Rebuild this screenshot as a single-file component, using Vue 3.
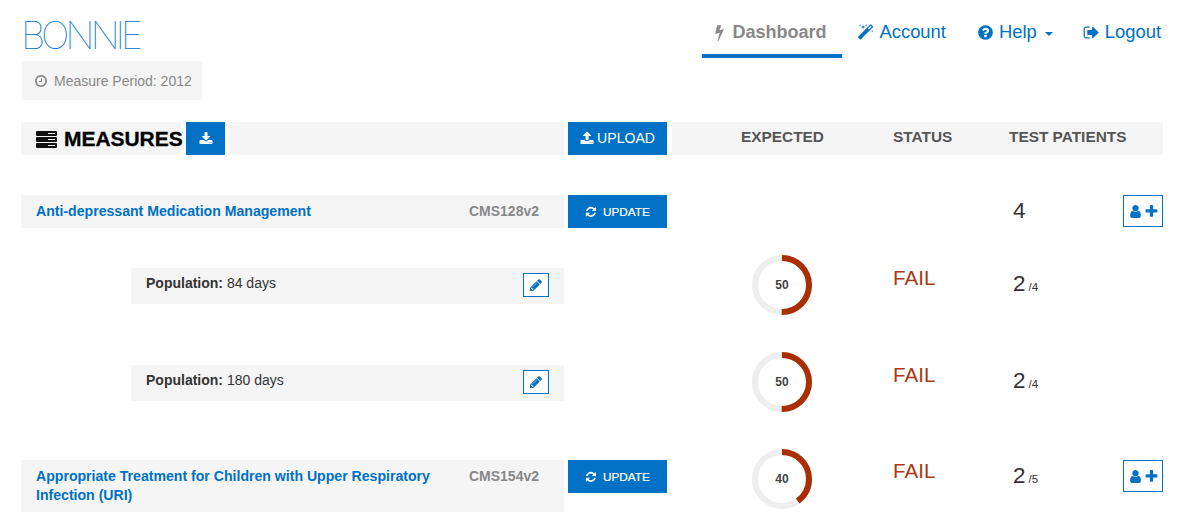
<template>
  <div class="page">
    <div class="top">
      <div class="brand">
        <div class="logo">BONNIE</div>
        <div class="period">
          <svg class="ico" viewBox="0 0 1792 1792"><path :d="icons.clock" /></svg>
          Measure Period: 2012
        </div>
      </div>
      <nav class="nav">
        <a class="nav-item active"><svg class="ico" viewBox="0 0 1792 1792"><path :d="icons.bolt" /></svg>Dashboard</a>
        <a class="nav-item account"><svg class="ico" viewBox="0 0 1792 1792"><path :d="icons.magic" /></svg>Account</a>
        <a class="nav-item"><svg class="ico" viewBox="0 0 1792 1792"><path :d="icons.help" /></svg>Help<span class="caret"></span></a>
        <a class="nav-item"><svg class="ico" viewBox="0 0 1792 1792"><path :d="icons.logout" /></svg>Logout</a>
      </nav>
    </div>

    <div class="row head">
      <div class="head-left">
        <div class="head-title">
          <span class="stack"><i></i><i></i><i></i></span>
          <h1>MEASURES</h1>
        </div>
        <button class="btn btn-icon"><svg class="ico" viewBox="0 0 1792 1792"><path :d="icons.download" /></svg></button>
        <div class="head-fill"></div>
      </div>
      <button class="btn btn-upload"><svg class="ico" viewBox="0 0 1792 1792"><path :d="icons.upload" /></svg><span>UPLOAD</span></button>
      <div class="head-cell expected">EXPECTED</div>
      <div class="head-cell">STATUS</div>
      <div class="head-cell patients-head">TEST PATIENTS</div>
    </div>

    <div v-for="row in rows" :key="row.id" class="row" :class="row.title ? 'measure' : 'pop'">
      <div v-if="row.title" class="bar measure-bar">
        <a class="measure-name">{{ row.title }}</a>
        <span class="code">{{ row.code }}</span>
      </div>
      <div v-else class="bar pop-bar">
        <span class="pop-text"><strong>Population:</strong> {{ row.days }} days</span>
        <button class="edit"><svg class="ico" viewBox="0 0 1792 1792"><path :d="icons.pencil" /></svg></button>
      </div>

      <div>
        <button v-if="row.title" class="btn btn-update"><svg class="ico" viewBox="0 0 1792 1792"><path :d="icons.refresh" /></svg>UPDATE</button>
      </div>

      <div>
        <svg v-if="row.expected" class="donut" width="60" height="60" viewBox="0 0 60 60">
          <circle cx="30" cy="30" r="27" class="track" />
          <circle cx="30" cy="30" r="27" class="arc" :stroke-dasharray="dash(row.expected)" transform="rotate(-90 30 30)" />
          <text x="30" y="34">{{ row.expected }}</text>
        </svg>
      </div>

      <div class="status">{{ row.expected ? 'FAIL' : '' }}</div>

      <div class="count">{{ row.passed }}<small v-if="row.total">/{{ row.total }}</small></div>

      <div>
        <button v-if="row.title" class="add">
          <svg class="ico" viewBox="0 0 1792 1792"><path :d="icons.user" /></svg>
          <svg class="ico" viewBox="0 0 1792 1792"><path :d="icons.plus" /></svg>
        </button>
      </div>
    </div>
  </div>
</template>

<script setup>
const icons = {
  clock: 'M1024 544v448q0 14-9 23t-23 9h-320q-14 0-23-9t-9-23v-64q0-14 9-23t23-9h224v-352q0-14 9-23t23-9h64q14 0 23 9t9 23zm416 352q0-148-73-273t-198-198-273-73-273 73-198 198-73 273 73 273 198 198 273 73 273-73 198-198 73-273zm224 0q0 209-103 385.500t-279.500 279.500-385.500 103-385.500-103-279.500-279.500-103-385.500 103-385.500 279.500-279.500 385.500-103 385.500 103 279.500 279.500 103 385.500z',
  bolt: 'M1333 566q18 20 7 44l-540 1157q-13 25-42 25-4 0-14-2-17-5-25.500-19t-4.500-30l197-808-406 101q-4 1-12 1-18 0-31-11-18-15-13-39l201-825q4-14 16-23t28-9h328q19 0 32 12.500t13 29.500q0 8-5 18l-171 463 396-98q8-2 12-2 19 0 34 15z',
  magic: 'M1254 581l293-293-107-107-293 293zm447-293q0 27-18 45l-1286 1286q-18 18-45 18t-45-18l-198-198q-18-18-18-45t18-45l1286-1286q18-18 45-18t45 18l198 198q18 18 18 45zm-1351-190l98 30-98 30-30 98-30-98-98-30 98-30 30-98zm350 162l196 60-196 60-60 196-60-196-196-60 196-60 60-196zm930 478l98 30-98 30-30 98-30-98-98-30 98-30 30-98zm-640-640l98 30-98 30-30 98-30-98-98-30 98-30 30-98z',
  help: 'M1024 1376v-192q0-14-9-23t-23-9h-192q-14 0-23 9t-9 23v192q0 14 9 23t23 9h192q14 0 23-9t9-23zm256-672q0-88-55.500-163t-138.500-116-170-41q-243 0-371 213-15 24 8 42l132 100q7 6 19 6 16 0 25-12 53-68 86-92 34-24 86-24 48 0 85.500 26t37.500 59q0 38-20 61t-68 45q-63 28-115.500 86.500t-52.500 125.500v36q0 14 9 23t23 9h192q14 0 23-9t9-23q0-19 21.500-49.500t54.500-49.500q32-18 49-28.500t46-35 44.500-48 28-60.500 12.500-81zm384 192q0 209-103 385.500t-279.500 279.500-385.500 103-385.500-103-279.500-279.500-103-385.500 103-385.500 279.500-279.500 385.500-103 385.500 103 279.500 279.500 103 385.500z',
  logout: 'M704 1440q0 4 1 20t.5 26.500-3 23.500-10 19.500-20.500 6.500h-320q-119 0-203.500-84.500t-84.500-203.500v-704q0-119 84.500-203.500t203.500-84.500h320q13 0 22.500 9.500t9.500 22.500q0 4 1 20t.5 26.500-3 23.500-10 19.500-20.500 6.500h-320q-66 0-113 47t-47 113v704q0 66 47 113t113 47h312l11.500 1 11.500 3 8 5.500 7 9 2 13.500zm928-544q0 26-19 45l-544 544q-19 19-45 19t-45-19-19-45v-288h-448q-26 0-45-19t-19-45v-384q0-26 19-45t45-19h448v-288q0-26 19-45t45-19 45 19l544 544q19 19 19 45z',
  download: 'M1344 1344q0-26-19-45t-45-19-45 19-19 45 19 45 45 19 45-19 19-45zm256 0q0-26-19-45t-45-19-45 19-19 45 19 45 45 19 45-19 19-45zm128-224v320q0 40-28 68t-68 28h-1472q-40 0-68-28t-28-68v-320q0-40 28-68t68-28h465l135 136q58 56 136 56t136-56l136-136h464q40 0 68 28t28 68zm-325-569q17 41-14 70l-448 448q-18 19-45 19t-45-19l-448-448q-31-29-14-70 17-39 59-39h256v-448q0-26 19-45t45-19h256q26 0 45 19t19 45v448h256q42 0 59 39z',
  upload: 'M1344 1472q0-26-19-45t-45-19-45 19-19 45 19 45 45 19 45-19 19-45zm256 0q0-26-19-45t-45-19-45 19-19 45 19 45 45 19 45-19 19-45zm128-224v320q0 40-28 68t-68 28h-1472q-40 0-68-28t-28-68v-320q0-40 28-68t68-28h427q21 56 70.500 92t110.500 36h256q61 0 110.500-36t70.500-92h427q40 0 68 28t28 68zm-325-648q-17 40-59 40h-256v448q0 26-19 45t-45 19h-256q-26 0-45-19t-19-45v-448h-256q-42 0-59-40-17-39 14-69l448-448q18-19 45-19t45 19l448 448q31 30 14 69z',
  refresh: 'M1639 1056q0 5-1 7-64 268-268 434.500t-478 166.500q-146 0-282.500-55t-243.500-157l-129 129q-19 19-45 19t-45-19-19-45v-448q0-26 19-45t45-19h448q26 0 45 19t19 45-19 45l-137 137q71 66 161 102t187 36q134 0 250-65t186-179q11-17 53-117 8-23 30-23h192q13 0 22.500 9.500t9.500 22.500zm25-800v448q0 26-19 45t-45 19h-448q-26 0-45-19t-19-45 19-45l138-138q-148-137-349-137-134 0-250 65t-186 179q-11 17-53 117-8 23-30 23h-199q-13 0-22.500-9.500t-9.500-22.500v-7q65-268 270-434.500t480-166.500q146 0 284 55.500t245 156.500l130-129q19-19 45-19t45 19 19 45z',
  pencil: 'M491 1536l91-91-235-235-91 91v107h128v128h107zm523-928q0-22-22-22-10 0-17 7l-542 542q-7 7-7 17 0 22 22 22 10 0 17-7l542-542q7-7 7-17zm-54-192l416 416-832 832h-416v-416zm683 96q0 53-37 90l-166 166-416-416 166-165q36-38 90-38 53 0 91 38l235 234q37 39 37 91z',
  user: 'M1536 1399q0 109-62.500 187t-150.500 78h-854q-88 0-150.500-78t-62.500-187q0-85 8.500-160.500t31.500-152 58.500-131 94-89 134.500-34.500q131 128 313 128t313-128q76 0 134.500 34.500t94 89 58.500 131 31.500 152 8.500 160.500zm-256-887q0 159-112.500 271.500t-271.500 112.500-271.500-112.500-112.500-271.500 112.500-271.500 271.500-112.500 271.500 112.500 112.500 271.500z',
  plus: 'M1600 736v192q0 40-28 68t-68 28h-416v416q0 40-28 68t-68 28h-192q-40 0-68-28t-28-68v-416h-416q-40 0-68-28t-28-68v-192q0-40 28-68t68-28h416v-416q0-40 28-68t68-28h192q40 0 68 28t28 68v416h416q40 0 68 28t28 68z',
}

const rows = [
  { id: 1, title: 'Anti-depressant Medication Management', code: 'CMS128v2', passed: 4 },
  { id: 2, days: 84, expected: 50, passed: 2, total: 4 },
  { id: 3, days: 180, expected: 50, passed: 2, total: 4 },
  { id: 4, title: 'Appropriate Treatment for Children with Upper Respiratory Infection (URI)', code: 'CMS154v2', expected: 40, passed: 2, total: 5 },
]

const circumference = 2 * Math.PI * 27
const dash = (pct) => `${(circumference * pct) / 100} ${circumference}`
</script>

<style scoped>
.page {
  padding: 0 0 0 21px;
  width: 1166px;
  font-family: "Liberation Sans", Arial, sans-serif;
  color: #333;
}

.ico {
  width: 1em;
  height: 1em;
  fill: currentColor;
  flex: none;
}

.top {
  display: flex;
  justify-content: space-between;
  height: 122px;
}

.logo {
  margin: 12px 0 0 0;
  height: 44px;
  font-family: Inter, sans-serif;
  font-weight: 100;
  font-size: 38px;
  line-height: 46px;
  letter-spacing: -4.2px;
  color: #0071c5;
}

.period {
  display: flex;
  align-items: center;
  gap: 6px;
  margin: 5px 0 0 1px;
  width: 180px;
  height: 39px;
  box-sizing: border-box;
  padding-left: 12px;
  background: #f5f5f5;
  color: #888;
  font-size: 14px;
}

.nav {
  display: flex;
  height: 58px;
  margin-right: 11px;
}

.nav-item {
  display: flex;
  align-items: center;
  gap: 5px;
  box-sizing: border-box;
  height: 58px;
  padding: 10px 15px 0;
  color: #0071c5;
  font-size: 18.4px;
  border-bottom: 4px solid transparent;
}

.nav-item .ico {
  font-size: 17px;
}

.nav-item.account {
  padding-right: 16px;
}

.nav-item.active {
  gap: 4px;
  padding: 10px 16px 0 9px;
  color: #888;
  font-size: 18px;
  font-weight: bold;
  border-bottom-color: #0071c5;
}

.caret {
  margin: 3px 0 0 3px;
  border-top: 4px solid currentColor;
  border-left: 4px solid transparent;
  border-right: 4px solid transparent;
}

.row {
  display: grid;
  grid-template-columns: 547px 99px 226px 120px 110px 40px;
  align-items: start;
}

.head-left {
  display: flex;
  height: 33px;
  margin-right: 4px;
}

.head-title {
  display: flex;
  align-items: center;
  gap: 7px;
  width: 160px;
  box-sizing: border-box;
  padding-left: 15px;
  background: #f5f5f5;
}

.head-title h1 {
  margin: 0;
  font-size: 21px;
  letter-spacing: -0.05px;
  color: #000;
  -webkit-text-stroke: 0.3px #000;
}

.stack {
  display: flex;
  flex-direction: column;
  gap: 1px;
  margin-top: 1px;
}

.stack i {
  position: relative;
  display: block;
  width: 21px;
  height: 5px;
  border-radius: 1px;
  background: #111;
}

.stack i::after {
  content: "";
  position: absolute;
  top: 2px;
  left: 12px;
  width: 7px;
  height: 1px;
  background: #eee;
}

.head-fill {
  flex: 1;
  margin-left: 4px;
  background: #f5f5f5;
}

.btn {
  display: flex;
  align-items: center;
  justify-content: center;
  border: 0;
  padding: 0;
  background: #0071c5;
  color: #fff;
  font-family: inherit;
}

.btn-icon {
  width: 39px;
  height: 33px;
  margin-left: 5px;
  font-size: 14px;
}

.btn-upload {
  gap: 3px;
  width: 99px;
  height: 33px;
  padding-bottom: 1px;
  font-size: 14.1px;
}

.btn-update {
  gap: 6px;
  width: 99px;
  height: 33px;
  font-size: 11.8px;
  -webkit-text-stroke: 0.2px #fff;
}

.head-cell {
  height: 33px;
  background: #f5f5f5;
  color: #555;
  font-size: 15.4px;
  font-weight: bold;
  line-height: 30px;
}

.expected {
  margin-left: 5px;
  padding-left: 69px;
}

.patients-head {
  grid-column: 5 / 7;
  text-indent: -4px;
  white-space: nowrap;
}

.measure,
.pop {
  margin-top: 40px;
}

.pop + .pop {
  margin-top: 61px;
}

.pop + .measure {
  margin-top: 59px;
}

.bar {
  display: flex;
  margin-right: 4px;
  background: #f5f5f5;
  font-size: 14px;
  line-height: 19px;
}

.measure-bar {
  justify-content: space-between;
  align-items: flex-start;
  padding: 7px 25px 7px 15px;
}

.measure-name {
  width: 400px;
  color: #0071c5;
  font-size: 14.1px;
  font-weight: bold;
}

.code {
  color: #888;
  font-weight: bold;
}

.pop-bar {
  justify-content: space-between;
  margin-left: 110px;
  height: 36px;
  padding: 0 15px;
}

.pop-text {
  margin-top: 6px;
}

.edit {
  display: flex;
  align-items: center;
  justify-content: center;
  width: 26px;
  height: 24px;
  margin-top: 5px;
  padding: 0;
  border: 1px solid #0071c5;
  background: #fff;
  color: #0071c5;
  font-size: 14px;
}

.donut {
  display: block;
  margin: -13px 0 -20px 85px;
}

.measure .donut {
  margin-top: -11px;
}

.track,
.arc {
  fill: none;
  stroke-width: 6;
}

.track {
  stroke: #eee;
}

.arc {
  stroke: #a92e00;
}

.donut text {
  font-size: 12px;
  font-weight: bold;
  fill: #444;
  text-anchor: middle;
}

.status {
  margin-top: -2px;
  font-size: 20.6px;
  line-height: 23px;
  color: #a63a14;
}

.measure .status {
  margin-top: -1px;
}

.count {
  margin-top: 3px;
  font-size: 22.5px;
  line-height: 26px;
}

.count small {
  margin-left: 3px;
  font-size: 11.5px;
}

.add {
  display: flex;
  align-items: center;
  justify-content: center;
  gap: 1px;
  width: 40px;
  height: 32px;
  padding: 0;
  border: 1px solid #0071c5;
  background: #fff;
  color: #0071c5;
  font-size: 15px;
}
</style>

<style>
html,
body {
  overflow: hidden;
}
</style>
